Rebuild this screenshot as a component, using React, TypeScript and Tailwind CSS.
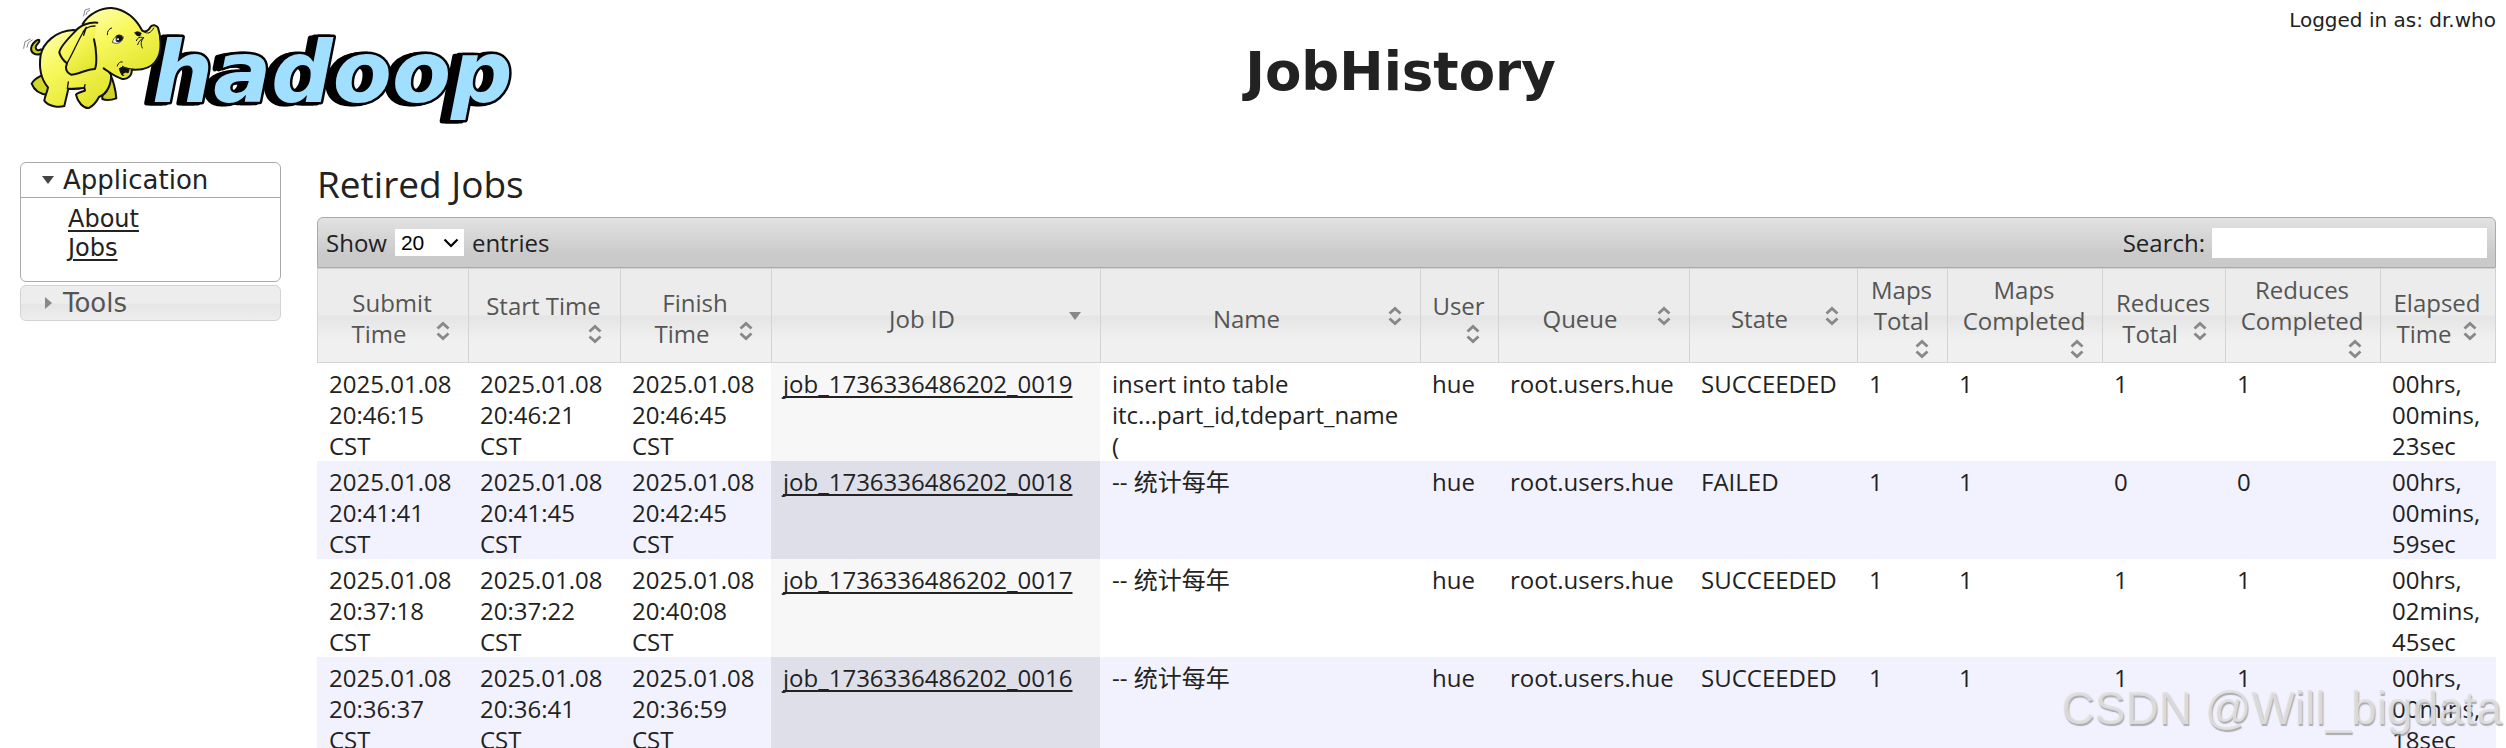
import { useState } from "react";

type Column = { label: string[]; width: string; sorted?: boolean };

interface Job {
  submit: string;
  start: string;
  finish: string;
  id: string;
  name: string[];
  user: string;
  queue: string;
  state: string;
  mapsTotal: number;
  mapsCompleted: number;
  reducesTotal: number;
  reducesCompleted: number;
  elapsed: string[];
}

const columns: Column[] = [
  { label: ["Submit", "Time"], width: "w-[151px]" },
  { label: ["Start Time"], width: "w-[152px]" },
  { label: ["Finish", "Time"], width: "w-[151px]" },
  { label: ["Job ID"], width: "w-[329px]", sorted: true },
  { label: ["Name"], width: "w-[320px]" },
  { label: ["User"], width: "w-[78px]" },
  { label: ["Queue"], width: "w-[191px]" },
  { label: ["State"], width: "w-[168px]" },
  { label: ["Maps", "Total"], width: "w-[90px]" },
  { label: ["Maps", "Completed"], width: "w-[155px]" },
  { label: ["Reduces", "Total"], width: "w-[123px]" },
  { label: ["Reduces", "Completed"], width: "w-[155px]" },
  { label: ["Elapsed", "Time"], width: "w-[116px]" },
];

const jobs: Job[] = [
  {
    submit: "20:46:15",
    start: "20:46:21",
    finish: "20:46:45",
    id: "job_1736336486202_0019",
    name: ["insert into table", "itc...part_id,tdepart_name", "("],
    user: "hue",
    queue: "root.users.hue",
    state: "SUCCEEDED",
    mapsTotal: 1,
    mapsCompleted: 1,
    reducesTotal: 1,
    reducesCompleted: 1,
    elapsed: ["00hrs,", "00mins,", "23sec"],
  },
  {
    submit: "20:41:41",
    start: "20:41:45",
    finish: "20:42:45",
    id: "job_1736336486202_0018",
    name: ["-- 统计每年"],
    user: "hue",
    queue: "root.users.hue",
    state: "FAILED",
    mapsTotal: 1,
    mapsCompleted: 1,
    reducesTotal: 0,
    reducesCompleted: 0,
    elapsed: ["00hrs,", "00mins,", "59sec"],
  },
  {
    submit: "20:37:18",
    start: "20:37:22",
    finish: "20:40:08",
    id: "job_1736336486202_0017",
    name: ["-- 统计每年"],
    user: "hue",
    queue: "root.users.hue",
    state: "SUCCEEDED",
    mapsTotal: 1,
    mapsCompleted: 1,
    reducesTotal: 1,
    reducesCompleted: 1,
    elapsed: ["00hrs,", "02mins,", "45sec"],
  },
  {
    submit: "20:36:37",
    start: "20:36:41",
    finish: "20:36:59",
    id: "job_1736336486202_0016",
    name: ["-- 统计每年"],
    user: "hue",
    queue: "root.users.hue",
    state: "SUCCEEDED",
    mapsTotal: 1,
    mapsCompleted: 1,
    reducesTotal: 1,
    reducesCompleted: 1,
    elapsed: ["00hrs,", "00mins,", "18sec"],
  },
];

function Logo() {
  return (
    <svg viewBox="0 0 500 125" className="block w-[500px] h-[125px]" role="img" aria-label="hadoop">
      <defs>
        <linearGradient id="skin" x1="0" y1="0" x2="0.6" y2="1">
          <stop offset="0" stopColor="#ffffb8" />
          <stop offset="0.45" stopColor="#f8f85e" />
          <stop offset="1" stopColor="#e3e62e" />
        </linearGradient>
      </defs>
      <text
        x="137"
        y="102"
        fontFamily='"DejaVu Sans", sans-serif'
        fontWeight="bold"
        fontStyle="italic"
        fontSize="86"
        fill="#a0dfff"
        stroke="#000"
        strokeWidth="5"
        strokeLinejoin="round"
        paintOrder="stroke"
        className="[filter:drop-shadow(-4px_0_0_#000)_drop-shadow(-4px_1px_0_#000)]"
      >
        hadoop
      </text>
      {/* Elephant */}
      <g transform="scale(0.3333)" stroke="#111" strokeWidth="6" strokeLinejoin="round" strokeLinecap="round">
        <g fill="none" stroke="#888" strokeWidth="3">
          <path d="M26 145 L30 125 L46 117" />
          <path d="M36 142 L40 128 L52 120" />
          <path d="M206 48 L210 30 L224 26" />
          <path d="M213 44 L217 35 L224 31" />
        </g>
        <path
          d="M76 162 C56 168 44 154 50 138 C56 126 68 117 73 120 C76 129 62 132 62 142 C63 151 70 153 78 148"
          fill="#c9cc22"
        />
        <path d="M80 226 C64 234 54 243 50 251 C56 267 72 282 97 284 L104 250 Z" fill="#d3d62a" />
        <path d="M284 218 C294 240 302 270 304 295 C290 300 272 301 262 297 L262 286 C272 280 278 270 280 258 Z" fill="#cfd227" />
        <path
          d="M175 90 C122 92 84 130 77 165 C71 205 80 240 99 262 C97 276 90 286 88 302 C100 320 132 323 148 318 L160 266 C176 268 192 267 208 263 L210 272 C200 275 188 278 183 284 C187 305 205 326 222 324 C240 314 246 302 252 291 C278 280 290 250 288 224 L270 200 L240 100 Z"
          fill="url(#skin)"
        />
        <path d="M160 246 L157 266 L208 264 L210 254" fill="none" strokeWidth="4" />
        <path
          d="M203 72 C222 40 260 23 290 24 C334 29 364 58 382 92 C392 98 400 92 407 80 C413 73 423 74 429 83 C438 108 440 150 430 170 C417 200 386 212 350 209 C352 226 338 240 320 236 C300 231 283 216 266 205 L236 170 L215 110 Z"
          fill="url(#skin)"
          stroke="none"
        />
        <path
          d="M203 72 C222 40 260 23 290 24 C334 29 364 58 382 92 C392 98 400 92 407 80 C413 73 423 74 429 83 C438 108 440 150 430 170 C417 200 386 212 350 209 C352 226 338 240 320 236 C300 231 283 216 266 205"
          fill="none"
        />
        <path
          d="M247 68 C222 66 194 76 180 95 C150 125 134 145 133 158 C138 174 148 184 156 190 C149 206 154 217 168 224 C190 224 214 207 240 207 C247 190 244 146 237 118"
          fill="url(#skin)"
        />
        <path d="M156 190 C174 160 190 118 212 84 M240 78 C222 78 208 86 204 96 M214 82 L206 106" fill="none" strokeWidth="4" />
        <path d="M314 206 C318 198 330 205 342 206 C343 219 334 228 322 226 C318 220 314 214 314 206 Z" fill="#111" strokeWidth="3" />
        <path d="M324 222 C331 216 337 218 341 222 C336 231 328 231 324 222 Z" fill="#d9dc2e" stroke="none" />
        <path d="M307 198 C310 188 316 184 322 186 M322 199 C334 206 346 206 358 208" fill="none" strokeWidth="3" />
        <path d="M292 126 C298 108 312 100 325 110 C324 122 314 132 302 130 Z" fill="#fff" strokeWidth="2" />
        <path d="M304 108 C312 102 323 106 323 115 C320 126 308 128 304 124 Z" fill="#111" strokeWidth="2" />
        <circle cx="309" cy="118" r="3" fill="#fff" stroke="none" />
        <path d="M277 104 C276 94 282 86 290 84" fill="none" strokeWidth="3" />
        <path d="M360 98 C366 92 374 96 379 100 L375 108 C368 108 362 106 360 98 Z" fill="#111" strokeWidth="2" />
        <path d="M364 122 C366 114 374 110 382 112 M368 134 C372 124 376 118 384 116 M382 144 C376 132 378 122 386 112 M386 94 C396 104 408 100 416 84" fill="none" strokeWidth="3" />
      </g>
    </svg>
  );
}

function SortIcon({ sorted }: { sorted?: boolean }) {
  return (
    <svg viewBox="0 0 26 26" className="float-right block w-[26px] h-[26px]" aria-hidden="true">
      {sorted ? (
        <path d="M7 9 H19 L13 17 Z" fill="#888" />
      ) : (
        <g fill="none" stroke="#888" strokeWidth="2.8">
          <path d="M7.5 10.5 L13 5.5 L18.5 10.5" />
          <path d="M7.5 15.5 L13 20.5 L18.5 15.5" />
        </g>
      )}
    </svg>
  );
}

function Lines({ items }: { items: string[] }) {
  return (
    <>
      {items.map((line, i) => (
        <span key={i}>
          {i > 0 && <br />}
          {line}
        </span>
      ))}
    </>
  );
}

function Sidebar() {
  const [open, setOpen] = useState("application");

  return (
    <nav className="w-[261px] shrink-0 flex flex-col gap-[3px] font-['DejaVu_Sans',sans-serif]">
      <div className="rounded-md border border-[#aaa] bg-white">
        <button
          type="button"
          onClick={() => setOpen("application")}
          className="flex w-full items-center gap-2 border-b border-[#aaa] pl-5 h-[35px] text-[26px] leading-[36px] text-[#222]"
        >
          <svg viewBox="0 0 14 14" className="w-[14px] h-[14px]" aria-hidden="true">
            <path d="M1 3 H13 L7 11 Z" fill="#454545" />
          </svg>
          Application
        </button>
        {open === "application" && (
          <ul className="pt-[7px] pb-[18px] pl-[47px] text-[24px] leading-[29px] underline decoration-2 underline-offset-3">
            <li>
              <a href="#about">About</a>
            </li>
            <li>
              <a href="#jobs">Jobs</a>
            </li>
          </ul>
        )}
      </div>
      <button
        type="button"
        onClick={() => setOpen("application")}
        className="flex items-center gap-2 rounded-md border border-[#d3d3d3] bg-linear-to-b from-[#ededed] from-50% via-[#e5e5e5] via-55% to-[#eee] pl-5 h-[36px] text-[26px] leading-[34px] text-[#555]"
      >
        <svg viewBox="0 0 14 14" className="w-[14px] h-[14px]" aria-hidden="true">
          <path d="M4 1 V13 L11 7 Z" fill="#888" />
        </svg>
        Tools
      </button>
    </nav>
  );
}

function JobTable() {
  return (
    <table className="w-full table-fixed border-separate border-spacing-0">
      <thead>
        <tr>
          {columns.map(({ label, width, sorted }, i) => (
            <th
              key={i}
              className={`${width} h-[95px] border-l border-t border-b last:border-r border-[#d3d3d3] bg-linear-to-b from-[#ececec] from-49% via-[#e5e5e5] via-51% to-[#f0f0f0] to-75% pt-[5px] pb-0 pl-[10px] pr-[12px] align-middle text-center font-normal text-[#555]`}
            >
              <Lines items={label} />
              <SortIcon sorted={sorted} />
            </th>
          ))}
        </tr>
      </thead>
      <tbody className="align-top">
        {jobs.map(job => (
          <tr key={job.id} className="group even:bg-[#f2f2ff] [&>td]:pt-[5px] [&>td]:pl-[12px]">
            <td>
              <Lines items={["2025.01.08", job.submit, "CST"]} />
            </td>
            <td>
              <Lines items={["2025.01.08", job.start, "CST"]} />
            </td>
            <td>
              <Lines items={["2025.01.08", job.finish, "CST"]} />
            </td>
            <td className="bg-[#f7f7f7] group-even:bg-[#dfdfe9]">
              <a href={`#${job.id}`} className="underline decoration-2 underline-offset-3 [text-decoration-skip-ink:none]">
                {job.id}
              </a>
            </td>
            <td className="whitespace-nowrap">
              <Lines items={job.name} />
            </td>
            <td>{job.user}</td>
            <td>{job.queue}</td>
            <td>{job.state}</td>
            <td>{job.mapsTotal}</td>
            <td>{job.mapsCompleted}</td>
            <td>{job.reducesTotal}</td>
            <td>{job.reducesCompleted}</td>
            <td>
              <Lines items={job.elapsed} />
            </td>
          </tr>
        ))}
      </tbody>
    </table>
  );
}

export default function App() {
  const [pageSize, setPageSize] = useState("20");
  const [search, setSearch] = useState("");

  return (
    <div className="relative h-screen overflow-hidden bg-white text-[#222] font-['Open_Sans','Noto_Sans_CJK_SC',sans-serif] text-[24px] leading-[31px]">
      <header className="flex h-[162px] pl-[15px] pr-[10px] font-['DejaVu_Sans',sans-serif]">
        <div className="w-[290px] shrink-0">
          <Logo />
        </div>
        <div className="flex-1 pt-[8px]">
          <p className="text-right text-[20px] leading-6">Logged in as: dr.who</p>
          <h1 className="pt-[9px] text-center text-[53px] leading-[62px] font-bold">JobHistory</h1>
        </div>
      </header>

      <div className="flex items-start gap-[36px] pl-[20px] pr-[10px]">
        <Sidebar />
        <main className="min-w-0 flex-1">
          <h2 className="h-[55px] text-[37px] leading-[44px]">Retired Jobs</h2>
          <div className="flex h-[51px] items-center justify-between rounded-t-md border border-[#aaa] bg-linear-to-b from-[#e2e2e2] to-[#cacaca] to-75% px-[8px]">
            <label className="flex items-center gap-[8px]">
              Show
              <span className="grid items-center">
                <select
                  value={pageSize}
                  onChange={e => setPageSize(e.target.value)}
                  className="col-start-1 row-start-1 h-[27px] w-[69px] appearance-none bg-white pl-[6px] font-['Liberation_Sans',sans-serif] text-[21px] leading-[27px] text-black"
                >
                  <option>20</option>
                  <option>40</option>
                  <option>60</option>
                  <option>80</option>
                  <option>100</option>
                </select>
                <svg
                  viewBox="0 0 16 10"
                  className="pointer-events-none col-start-1 row-start-1 mr-[5px] h-[10px] w-[16px] justify-self-end"
                  aria-hidden="true"
                >
                  <path d="M1.5 1.5 L8 8 L14.5 1.5" fill="none" stroke="#000" strokeWidth="2.2" />
                </svg>
              </span>
              entries
            </label>
            <label className="flex items-center gap-[7px]">
              Search:
              <input
                type="text"
                value={search}
                onChange={e => setSearch(e.target.value)}
                className="h-[30px] w-[275px] bg-white px-1 text-[21px]"
              />
            </label>
          </div>
          <JobTable />
        </main>
      </div>

      {/* Watermark */}
      <div className="pointer-events-none absolute right-[4px] bottom-[10px] font-['Liberation_Sans',sans-serif] text-[46px] leading-[60px] text-[#e0e0e0]/90 [text-shadow:1px_2px_1px_#888a]">
        CSDN @Will_bigdata
      </div>
    </div>
  );
}
